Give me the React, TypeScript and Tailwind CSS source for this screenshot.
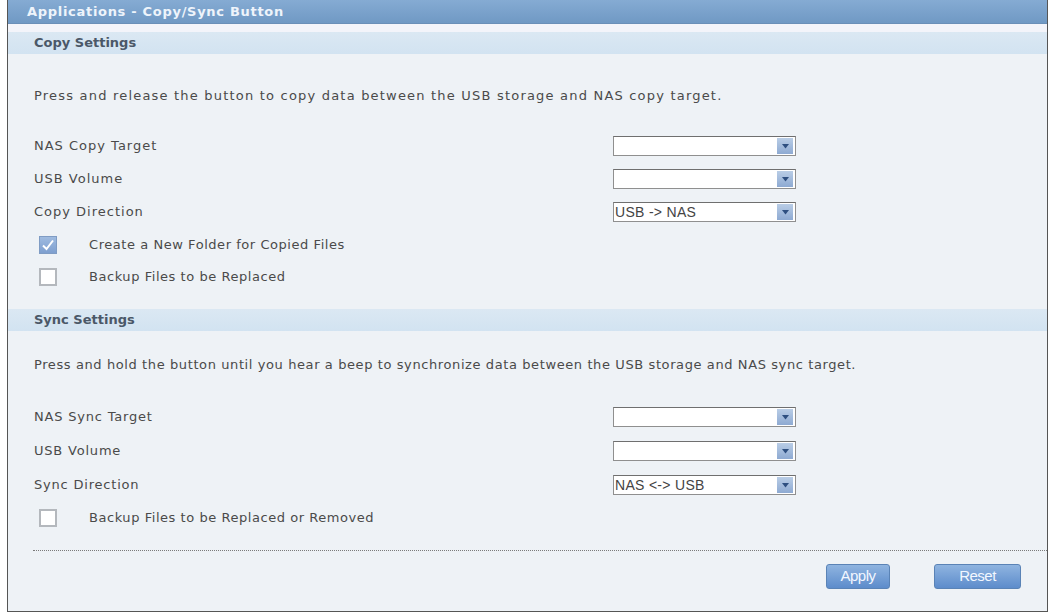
import React from "react";

type FieldRow = { label: string; value: string };

const copyFields: FieldRow[] = [
  { label: "NAS Copy Target", value: "" },
  { label: "USB Volume", value: "" },
  { label: "Copy Direction", value: "USB -> NAS" },
];

const syncFields: FieldRow[] = [
  { label: "NAS Sync Target", value: "" },
  { label: "USB Volume", value: "" },
  { label: "Sync Direction", value: "NAS <-> USB" },
];

function SelectBox({ value }: { value: string }) {
  return (
    <div className="w-[183px] h-[20px] bg-white border border-[#8f8f8f] border-t-[#6f6f6f] flex items-center justify-between">
      <span className="pl-[1px] text-[14px] tracking-[0.3px] text-[#444] font-['Liberation_Sans',sans-serif] leading-none">
        {value}
      </span>
      <span className="w-[16px] h-[16px] mr-[2px] bg-gradient-to-b from-[#b9cde6] to-[#8eaad2] flex items-center justify-center">
        <svg width="7" height="5" viewBox="0 0 7 5">
          <path d="M0 0 L7 0 L3.5 4.5 Z" fill="#2e4f80" />
        </svg>
      </span>
    </div>
  );
}

function CheckBox({ checked }: { checked: boolean }) {
  return (
    <span
      className={
        checked
          ? "w-[18px] h-[18px] border border-[#7f9cc4] bg-gradient-to-b from-[#9fbbe0] to-[#7e9fcf] flex items-center justify-center"
          : "w-[18px] h-[18px] border-2 border-[#b4b8bd] bg-white"
      }
    >
      {checked && (
        <svg width="14" height="14" viewBox="0 0 14 14">
          <path d="M2 7.5 L5.5 11 L12 2.5" stroke="#ffffff" strokeWidth="2" fill="none" />
        </svg>
      )}
    </span>
  );
}

function SectionHeader({ title }: { title: string }) {
  return (
    <div className="h-[22px] bg-gradient-to-b from-[#dbe8f3] to-[#d2e3f1] flex items-center pl-[26px]">
      <span className="text-[13px] font-bold text-[#4b5868]">{title}</span>
    </div>
  );
}

function FieldRows({ rows, gap, tracking }: { rows: FieldRow[]; gap: string; tracking: string }) {
  return (
    <div className={`flex flex-col ${gap}`}>
      {rows.map((r) => (
        <div key={r.label} className="h-[20px] flex items-center pl-[26px]">
          <span className={`w-[579px] text-[13px] text-[#4a4a4a] ${tracking}`}>{r.label}</span>
          <SelectBox value={r.value} />
        </div>
      ))}
    </div>
  );
}

function CheckRow({ label, checked }: { label: string; checked: boolean }) {
  return (
    <div className="h-[20px] flex items-center pl-[31px]">
      <CheckBox checked={checked} />
      <span className="ml-[32px] text-[13px] tracking-[0.55px] text-[#4a4a4a]">{label}</span>
    </div>
  );
}

export default function App() {
  return (
    <div className="w-[1051px] h-[614px] bg-white font-['DejaVu_Sans',Verdana,sans-serif]">
      <div className="ml-[7px] w-[1041px] h-[612px] border border-[#555] border-t-0 bg-[#eef2f6] flex flex-col">
        {/* Title bar */}
        <div className="h-[24px] bg-gradient-to-b from-[#85abd3] to-[#7099c4] border-b border-[#6a8fb8] flex items-center pl-[19px]">
          <span className="text-[13px] font-bold tracking-[0.7px] text-[#eef4fb]">Applications - Copy/Sync Button</span>
        </div>

        <div className="h-[8px] bg-[#f3f4fa]" />
        <SectionHeader title="Copy Settings" />

        <div className="h-[34px]" />
        <div className="h-[16px] flex items-center pl-[26px] text-[13px] tracking-[1.2px] text-[#4a4a4a]">
          Press and release the button to copy data between the USB storage and NAS copy target.
        </div>

        <div className="h-[32px]" />
        <FieldRows rows={copyFields} gap="gap-[13px]" tracking="tracking-[1px]" />

        <div className="h-[13px]" />
        <div className="flex flex-col gap-[12px]">
          <CheckRow label="Create a New Folder for Copied Files" checked />
          <CheckRow label="Backup Files to be Replaced" checked={false} />
        </div>

        <div className="h-[22px]" />
        <SectionHeader title="Sync Settings" />

        <div className="h-[26px]" />
        <div className="h-[16px] flex items-center pl-[26px] text-[13px] tracking-[0.6px] text-[#4a4a4a]">
          Press and hold the button until you hear a beep to synchronize data between the USB storage and NAS sync target.
        </div>

        <div className="h-[34px]" />
        <FieldRows rows={syncFields} gap="gap-[14px]" tracking="tracking-[0.8px]" />

        <div className="h-[13px]" />
        <CheckRow label="Backup Files to be Replaced or Removed" checked={false} />

        <div className="h-[22px]" />
        <div className="ml-[25px] border-t border-dotted border-[#7a7a7a]" />

        <div className="flex justify-end gap-[44px] pr-[26px] pt-[13px]">
          <button
            type="button"
            className="w-[64px] h-[25px] rounded-[3px] border border-[#5a83b6] bg-gradient-to-b from-[#8fb4e0] to-[#5d8ccb] text-[15px] text-[#f2f7ff] font-['Liberation_Sans',sans-serif] tracking-[-0.5px]"
          >
            Apply
          </button>
          <button
            type="button"
            className="w-[87px] h-[25px] rounded-[3px] border border-[#5a83b6] bg-gradient-to-b from-[#8fb4e0] to-[#5d8ccb] text-[15px] text-[#f2f7ff] font-['Liberation_Sans',sans-serif] tracking-[-0.5px]"
          >
            Reset
          </button>
        </div>
      </div>
    </div>
  );
}
